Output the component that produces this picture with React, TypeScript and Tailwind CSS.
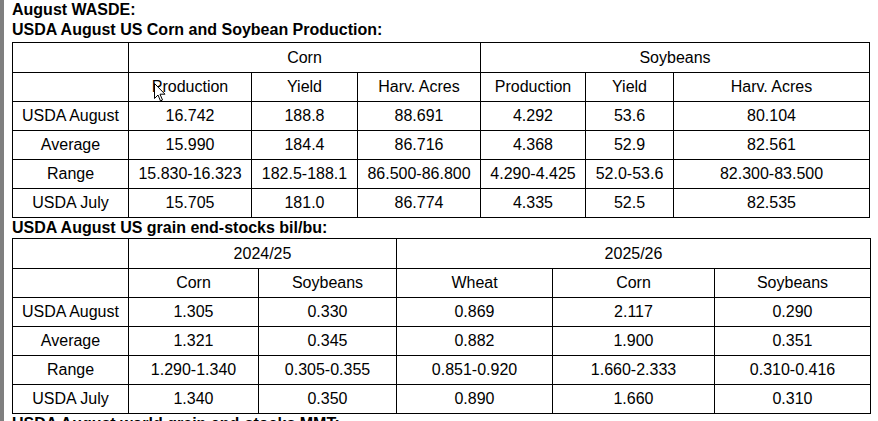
import React from "react";

const font = { fontFamily: '"Liberation Sans", Arial, sans-serif' };

const cell = "flex items-center justify-center border-r border-b border-black whitespace-nowrap";

function Row({ cells, h }: { cells: string[]; h: string }) {
  return (
    <>
      {cells.map((c, i) => (
        <div key={i} className={`${cell} ${h}`}>
          {c}
        </div>
      ))}
    </>
  );
}

export default function App() {
  const t1 = [
    ["USDA August", "16.742", "188.8", "88.691", "4.292", "53.6", "80.104"],
    ["Average", "15.990", "184.4", "86.716", "4.368", "52.9", "82.561"],
    ["Range", "15.830-16.323", "182.5-188.1", "86.500-86.800", "4.290-4.425", "52.0-53.6", "82.300-83.500"],
    ["USDA July", "15.705", "181.0", "86.774", "4.335", "52.5", "82.535"],
  ];
  const t2 = [
    ["USDA August", "1.305", "0.330", "0.869", "2.117", "0.290"],
    ["Average", "1.321", "0.345", "0.882", "1.900", "0.351"],
    ["Range", "1.290-1.340", "0.305-0.355", "0.851-0.920", "1.660-2.333", "0.310-0.416"],
    ["USDA July", "1.340", "0.350", "0.890", "1.660", "0.310"],
  ];
  return (
    <div className="relative flex h-[421px] w-[878px] overflow-hidden bg-white text-black" style={font}>
      <div className="w-[4px] shrink-0 bg-[#7f7f7f]" />
      <div className="flex flex-col pl-[8px] text-[16px]">
        <div className="text-[16px] font-bold leading-[20px]">August WASDE:</div>
        <div className="mb-[2px] text-[16px] font-bold leading-[20px]">USDA August US Corn and Soybean Production:</div>
        <div className="grid w-[858px] grid-cols-[116px_123px_106px_123px_105px_88px_196px] border-l border-t border-black">
          <div className={`${cell} h-[30px]`} />
          <div className={`${cell} col-span-3 h-[30px]`}>Corn</div>
          <div className={`${cell} col-span-3 h-[30px]`}>Soybeans</div>
          <Row h="h-[29px]" cells={["", "Production", "Yield", "Harv. Acres", "Production", "Yield", "Harv. Acres"]} />
          {t1.map((r, i) => (
            <Row key={i} h="h-[29px]" cells={r} />
          ))}
        </div>
        <div className="text-[16px] font-bold leading-[20px]">USDA August US grain end-stocks bil/bu:</div>
        <div className="grid w-[859px] grid-cols-[116px_130px_138px_156px_162px_156px] border-l border-t border-black">
          <div className={`${cell} h-[30px]`} />
          <div className={`${cell} col-span-2 h-[30px]`}>2024/25</div>
          <div className={`${cell} col-span-3 h-[30px]`}>2025/26</div>
          <Row h="h-[29px]" cells={["", "Corn", "Soybeans", "Wheat", "Corn", "Soybeans"]} />
          {t2.map((r, i) => (
            <Row key={i} h="h-[29px]" cells={r} />
          ))}
        </div>
        <div className="text-[16px] font-bold leading-[20px]">USDA August world grain end-stocks MMT:</div>
      </div>
      <svg className="absolute left-[154px] top-[83px]" width="12" height="19" viewBox="0 0 12 19">
        <path d="M0.5 0.5 L0.5 15.5 L4 12 L6.5 18 L8.5 17 L6 11.2 L11 11.2 Z" fill="white" stroke="black" strokeWidth="1" />
      </svg>
    </div>
  );
}
